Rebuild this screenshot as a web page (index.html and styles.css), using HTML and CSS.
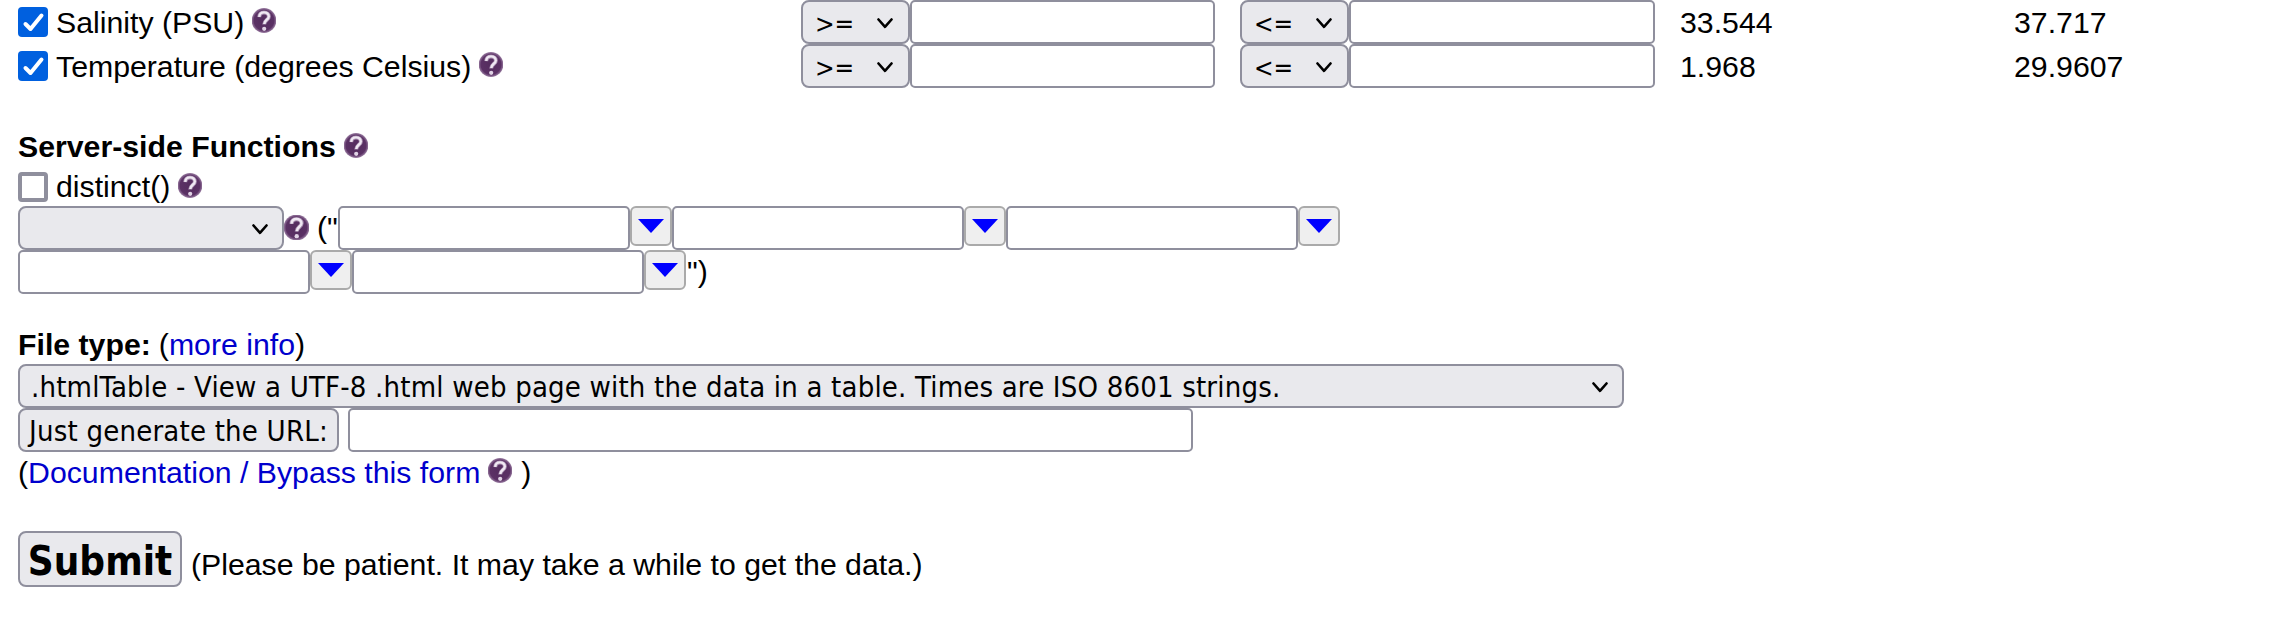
FILE: index.html
```
<!DOCTYPE html>
<html lang="en">
<head>
<meta charset="utf-8">
<title>Data Access Form</title>
<link rel="stylesheet" href="styles.css">
</head>
<body>
<svg class="defs" width="0" height="0" aria-hidden="true">
  <defs>
    <radialGradient id="orb">
      <stop offset="0" stop-color="#542c5e"/><stop offset=".8" stop-color="#5b3165"/><stop offset="1" stop-color="#9a7da2"/>
    </radialGradient>
  </defs>
  <symbol id="help" viewBox="0 0 24 24">
    <circle cx="12" cy="12" r="12.400" fill="url(#orb)"/>
    <path d="M7.200 8.600C7.400 5.200 9.400 3.900 12 3.900c2.900 0 4.900 1.600 4.900 4 0 3.600-4.700 3.600-4.700 8" fill="none" stroke="#a58cad" stroke-width="4"/>
    <path d="M7.200 8.400C7.400 5.300 9.400 3.900 12 3.900c2.800 0 4.800 1.600 4.800 4 0 3.400-4.500 3.400-4.500 7.600" fill="none" stroke="#f0e8f3" stroke-width="2.400"/>
    <circle cx="12.200" cy="20.300" r="2.100" fill="#e0d3e5"/>
  </symbol>
  <symbol id="chevron" viewBox="0 0 16 11"><path d="M1.500 1.500 8 8.800l6.500-7.300" fill="none" stroke="#000" stroke-width="2.600" stroke-linecap="round" stroke-linejoin="round"/></symbol>
  <symbol id="arrow" viewBox="0 0 26 14"><path d="M0 0h26L13 14z" fill="#00f"/></symbol>
  <symbol id="check" viewBox="0 0 30 30"><path d="m7.500 17 5 5L23.500 8.500" fill="none" stroke="#fff" stroke-width="4" stroke-linecap="round" stroke-linejoin="round"/></symbol>
</svg>
<main class="form">
  <div class="constraints">
    <div class="variable"><span class="box on"><svg><use href="#check"/></svg></span><span class="label">Salinity (PSU)</span><svg class="help"><use href="#help"/></svg></div>
    <div class="select op"><span>&gt;=</span><svg class="chevron"><use href="#chevron"/></svg></div><input class="value" type="text">
    <div class="select op second"><span>&lt;=</span><svg class="chevron"><use href="#chevron"/></svg></div><input class="value" type="text">
    <span class="min">33.544</span><span class="max">37.717</span>
  </div>
  <div class="constraints">
    <div class="variable"><span class="box on"><svg><use href="#check"/></svg></span><span class="label">Temperature (degrees Celsius)</span><svg class="help"><use href="#help"/></svg></div>
    <div class="select op"><span>&gt;=</span><svg class="chevron"><use href="#chevron"/></svg></div><input class="value" type="text">
    <div class="select op second"><span>&lt;=</span><svg class="chevron"><use href="#chevron"/></svg></div><input class="value" type="text">
    <span class="min">1.968</span><span class="max">29.9607</span>
  </div>

  <div class="line heading"><b>Server-side Functions</b><svg class="help"><use href="#help"/></svg></div>
  <div class="line distinct"><span class="box"></span><span class="label">distinct()</span><svg class="help"><use href="#help"/></svg></div>
  <div class="row">
    <div class="select func"><svg class="chevron"><use href="#chevron"/></svg></div><svg class="help tight"><use href="#help"/></svg><span class="open">("</span>
    <input class="arg" type="text"><button class="pick" type="button"><svg><use href="#arrow"/></svg></button>
    <input class="arg" type="text"><button class="pick" type="button"><svg><use href="#arrow"/></svg></button>
    <input class="arg" type="text"><button class="pick" type="button"><svg><use href="#arrow"/></svg></button>
  </div>
  <div class="row">
    <input class="arg" type="text"><button class="pick" type="button"><svg><use href="#arrow"/></svg></button>
    <input class="arg" type="text"><button class="pick" type="button"><svg><use href="#arrow"/></svg></button>
    <span class="close">")</span>
  </div>

  <div class="line filetype"><b>File type:</b><span class="more">(<a>more info</a>)</span></div>
  <div class="select file"><span>.htmlTable - View a UTF-8 .html web page with the data in a table. Times are ISO 8601 strings.</span><svg class="chevron"><use href="#chevron"/></svg></div>
  <div class="row"><button class="generate" type="button">Just generate the URL:</button><input class="url" type="text"></div>
  <div class="line docs"><span>(<a>Documentation / Bypass this form</a></span><svg class="help"><use href="#help"/></svg><span class="paren">)</span></div>

  <div class="submit-row"><button class="submit" type="button">Submit</button><span>(Please be patient. It may take a while to get the data.)</span></div>
</main>
</body>
</html>
```

FILE: styles.css
```
* { box-sizing: border-box; }
body {
  margin: 0;
  background: #fff;
  color: #000;
  font: 30.25px/34px "Liberation Sans", Arial, sans-serif;
  white-space: nowrap;
}
.defs { position: absolute; }
.form { padding-left: 18px; }
a { color: #0000cd; }
svg { display: block; flex: none; }
input, button { margin: 0; flex: none; }

.constraints, .row { display: flex; height: 44px; }
.constraints { align-items: center; }
.variable { display: flex; align-items: center; width: 783px; }
.line { display: flex; align-items: center; height: 40px; }
.label, .min, .max, .docs span { padding-top: 1px; }

.box {
  flex: none;
  width: 30px;
  height: 30px;
  margin-right: 8px;
  border: 4px solid #8f8f9d;
  border-radius: 4px;
}
.box.on { border: 0; background: #0060df; }
.box svg { width: 30px; height: 30px; }
.help { width: 24px; height: 25px; margin: 0 0 3px 8px; }

input {
  height: 44px;
  border: 2px solid #8f8f9d;
  border-radius: 5px;
  background: #fff;
}
.select {
  display: flex;
  align-items: center;
  justify-content: space-between;
  height: 44px;
  border: 2px solid #8f8f9d;
  border-radius: 8px;
  background: #e9e9ed;
}
.select span { padding-top: 2px; }
.select, .generate, .submit {
  font-family: "DejaVu Sans Condensed", "DejaVu Sans", sans-serif;
  font-stretch: condensed;
}
.chevron { width: 16px; height: 11px; margin-right: 14px; }
.op { width: 109px; padding-left: 12px; font-size: 26px; }
.op span { padding-top: 4px; }
.op .chevron { margin-right: 15px; margin-top: 2px; }
.op.second { margin-left: 25px; }
.value { width: 305px; }
.second + .value { width: 306px; }
.min { width: 334px; margin-left: 25px; }

.heading { margin-top: 39px; height: 40px; }
.distinct { height: 39px; }
.func { width: 266px; justify-content: flex-end; }
.func .chevron { margin-top: 2px; }
.help.tight { width: 25px; margin: 9px 0 0; }
.open { width: 29px; padding: 5px 0 0 8px; }
.close { padding: 5px 0 0 1px; }
.arg { width: 292px; }
.pick {
  width: 42px;
  height: 40px;
  padding: 0 0 1px 6px;
  border: 2px solid #aaa;
  border-radius: 6px;
  background: #efefef;
}
.pick svg { width: 26px; height: 14px; }

.filetype { margin-top: 31px; height: 39px; }
.more { margin-left: 8px; }
.file { width: 1606px; padding-left: 11px; font-size: 29px; letter-spacing: 0.18px; }
.file .chevron { margin-top: 2px; }
.generate, .submit {
  padding: 2px 0 0;
  border: 2px solid #8f8f9d;
  border-radius: 8px;
  background: #e9e9ed;
  color: #000;
}
.generate { width: 321px; height: 44px; font-size: 29px; letter-spacing: 0.2px; }
.url { width: 845px; margin-left: 9px; }
.paren { margin-left: 9px; }
.submit-row { display: flex; align-items: baseline; margin-top: 39px; gap: 9px; }
.submit { width: 164px; height: 56px; padding-top: 3px; font-size: 40px; font-weight: bold; }
```
